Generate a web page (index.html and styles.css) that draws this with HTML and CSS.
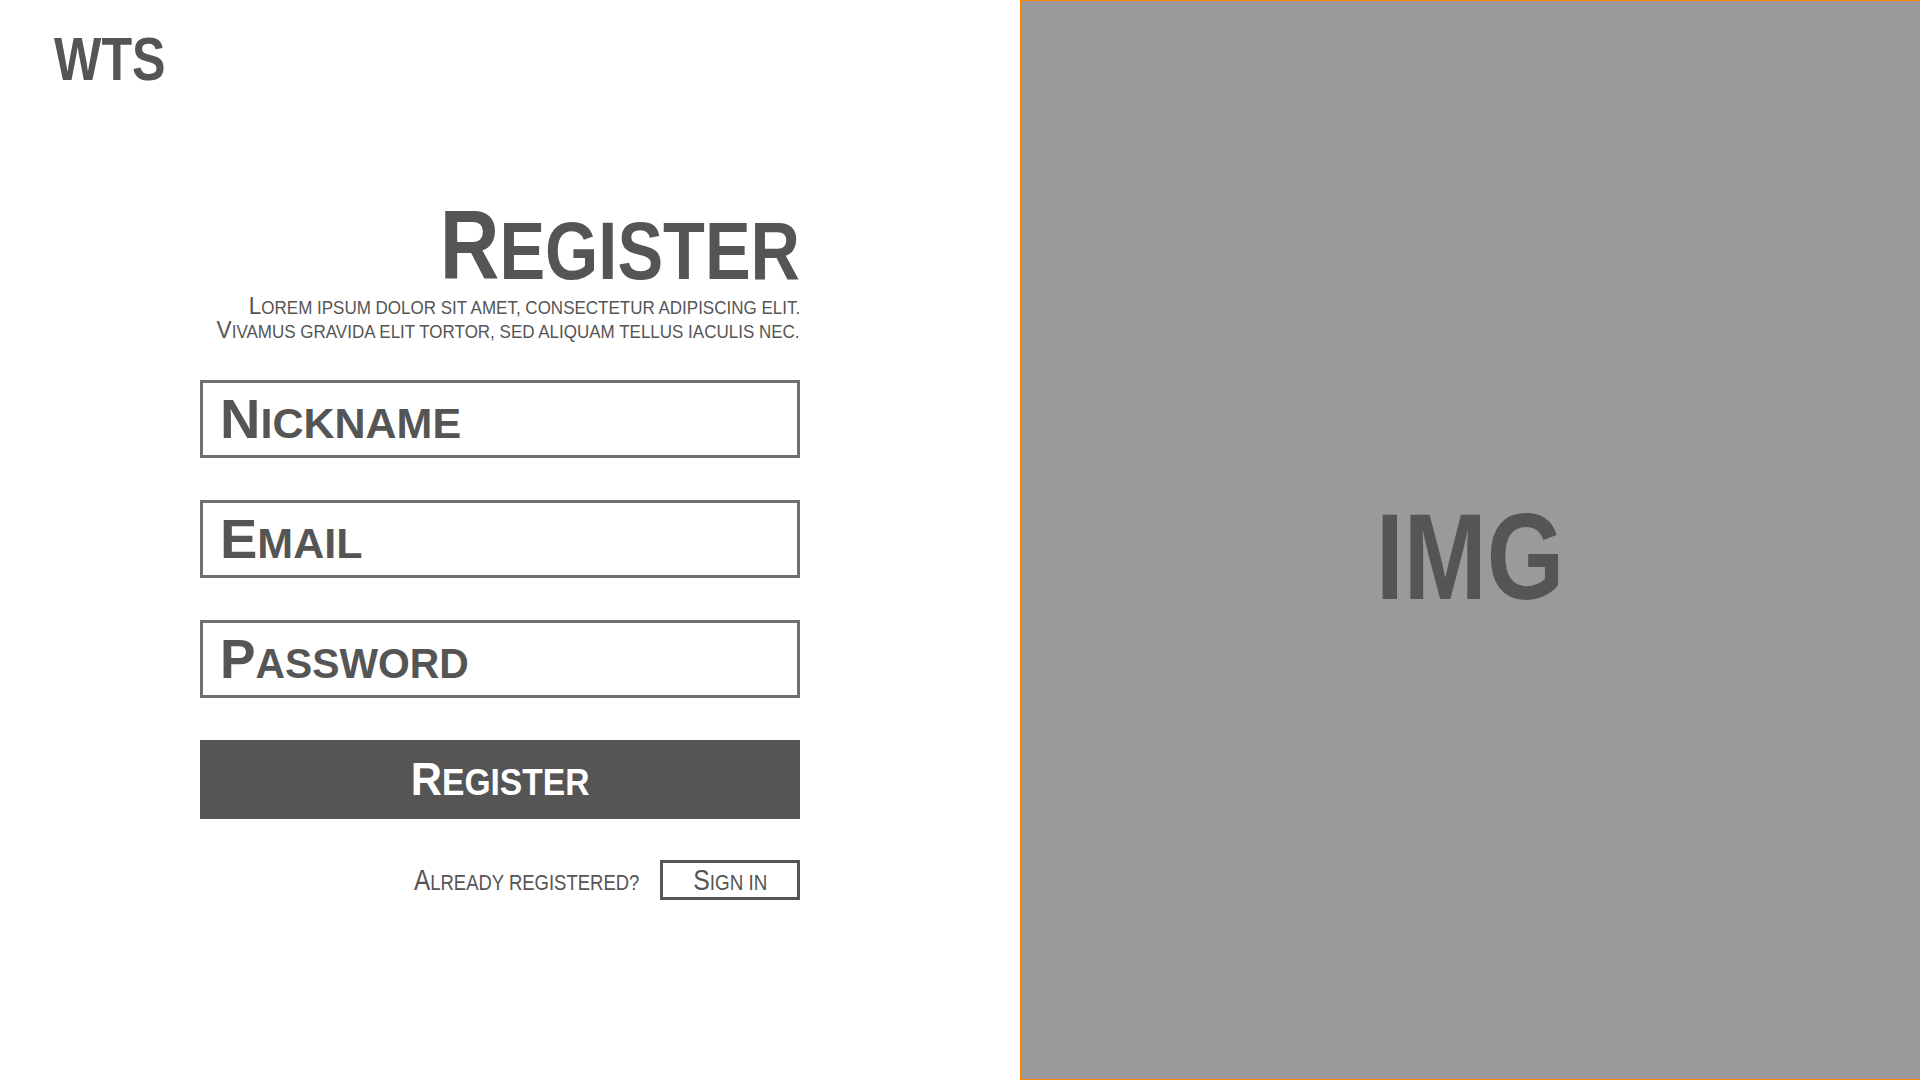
FILE: index.html
```html
<!DOCTYPE html>
<html lang="en">
<head>
<meta charset="utf-8">
<title>WTS – Register</title>
<link rel="stylesheet" href="styles.css">
</head>
<body>
<div class="page">
  <main class="left">
    <div class="logo">WTS</div>
    <section class="form-wrap">
      <h1 class="title">Register</h1>
      <p class="intro">
        <span class="line">Lorem ipsum dolor sit amet, consectetur adipiscing elit.</span>
        <span class="line">Vivamus gravida elit tortor, sed aliquam tellus iaculis nec.</span>
      </p>
      <form class="form">
        <div class="field"><span class="field-label">Nickname</span></div>
        <div class="field"><span class="field-label">Email</span></div>
        <div class="field"><span class="field-label field-label--tight">Password</span></div>
        <div class="btn-primary"><span class="btn-label">Register</span></div>
        <div class="signin-row">
          <span class="already">Already registered?</span>
          <span class="btn-signin"><span class="signin-label">Sign in</span></span>
        </div>
      </form>
    </section>
  </main>
  <aside class="panel">
    <span class="img-label">IMG</span>
  </aside>
</div>
</body>
</html>
```

FILE: styles.css
```css
html, body {
  margin: 0;
  padding: 0;
  background: #ffffff;
}

body {
  font-family: "Liberation Sans", Arial, sans-serif;
  color: #555555;
}

.page {
  display: flex;
  width: 1920px;
  height: 1080px;
}

.left {
  width: 1020px;
  flex: 0 0 1020px;
  display: flex;
  flex-direction: column;
}

/* condensed look (Arial Narrow style) */
.logo,
.title,
.line,
.field-label,
.btn-label,
.already,
.signin-label,
.img-label {
  display: inline-block;
}

.logo {
  align-self: flex-start;
  font-weight: 700;
  font-size: 62px;
  line-height: 1;
  margin: 28px 0 0 54px;
  transform: scaleX(0.81);
  transform-origin: left center;
}

.form-wrap {
  width: 600px;
  margin: 105px 0 0 200px;
  display: flex;
  flex-direction: column;
}

.title {
  margin: 0;
  font-weight: 700;
  font-size: 82px;
  line-height: 1;
  text-transform: uppercase;
  text-align: right;
  white-space: nowrap;
  transform: scaleX(0.835);
  transform-origin: right center;
}

.title::first-letter {
  font-size: 99px;
}

.intro {
  margin: 2px 0 0 0;
  text-align: right;
  font-size: 18px;
  text-transform: uppercase;
  display: flex;
  flex-direction: column;
  align-items: flex-end;
}

.line {
  display: block;
  line-height: 24px;
  white-space: nowrap;
  transform: scaleX(0.944);
  transform-origin: right center;
}

.line::first-letter {
  font-size: 24px;
  line-height: 0;
}

.form {
  display: flex;
  flex-direction: column;
  gap: 42px;
  margin-top: 36px;
}

.field {
  box-sizing: border-box;
  height: 78px;
  border: 3px solid #707070;
  padding: 0 17px;
  display: flex;
  align-items: center;
}

.field-label {
  font-weight: 700;
  font-size: 43px;
  line-height: 1;
  text-transform: uppercase;
  white-space: nowrap;
  transform-origin: left center;
}

.field-label--tight {
  transform: scaleX(0.95);
}

.field-label::first-letter {
  font-size: 56px;
}

.btn-primary {
  height: 79px;
  background: #555555;
  color: #ffffff;
  display: flex;
  align-items: center;
  justify-content: center;
}

.btn-label {
  font-weight: 700;
  font-size: 36.5px;
  line-height: 1;
  text-transform: uppercase;
  white-space: nowrap;
  transform: scaleX(0.92);
  transform-origin: center center;
  margin-top: -3px;
}

.btn-label::first-letter {
  font-size: 47px;
}

.signin-row {
  display: flex;
  justify-content: flex-end;
  align-items: center;
  gap: 21px;
  margin-top: -1px;
}

.already {
  font-size: 22px;
  text-transform: uppercase;
  line-height: 1;
  white-space: nowrap;
  transform: scaleX(0.84);
  transform-origin: right center;
}

.already::first-letter {
  font-size: 29px;
}

.btn-signin {
  box-sizing: border-box;
  width: 140px;
  height: 40px;
  border: 3px solid #555555;
  display: flex;
  align-items: center;
  justify-content: center;
}

.signin-label {
  font-size: 22px;
  text-transform: uppercase;
  line-height: 1;
  white-space: nowrap;
  transform: scaleX(0.855);
  transform-origin: center center;
}

.signin-label::first-letter {
  font-size: 29px;
}

.panel {
  flex: 1 1 auto;
  box-sizing: border-box;
  background: #9a9a9a;
  border: 1px solid #ff8a00;
  display: flex;
  align-items: center;
  justify-content: center;
  padding-top: 32px;
}

.img-label {
  font-weight: 700;
  font-size: 123px;
  line-height: 1;
  color: #555555;
  transform: scaleX(0.81);
  transform-origin: center center;
}
```
